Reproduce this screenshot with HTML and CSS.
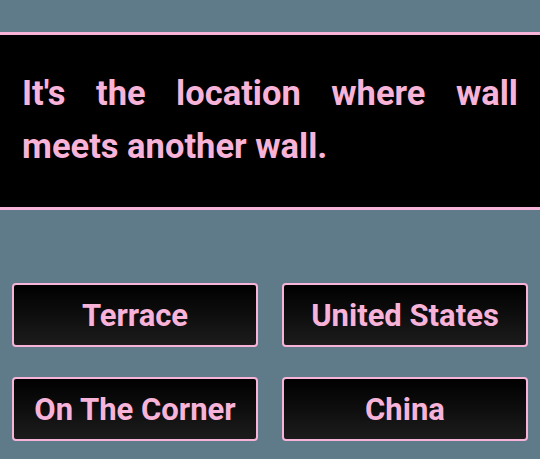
FILE: index.html
```html
<!DOCTYPE html>
<html>
<head>
<meta charset="utf-8">
<link rel="stylesheet" href="styles.css">
</head>
<body>
<div class="question">
  <p class="question-text">It's the location where wall meets another wall.</p>
</div>
<div class="answers">
  <button class="answer">Terrace</button>
  <button class="answer">United States</button>
  <button class="answer">On The Corner</button>
  <button class="answer">China</button>
</div>
</body>
</html>
```
FILE: styles.css
```css
html, body {
  margin: 0;
  padding: 0;
}
body {
  background: #5f7b8a;
  font-family: Roboto, "Liberation Sans", sans-serif;
  width: 540px;
  height: 459px;
  overflow: hidden;
}
.question {
  margin-top: 32px;
  background: #000;
  border-top: 3px solid #f7b3d8;
  border-bottom: 3px solid #f7b3d8;
  padding: 32px 22px 34px;
}
.question-text {
  margin: 0;
  color: #f7b3d8;
  font-weight: 700;
  font-size: 34.5px;
  line-height: 53px;
  text-align: justify;
}
.answers {
  display: grid;
  grid-template-columns: 246px 246px;
  column-gap: 24px;
  row-gap: 30px;
  padding: 73px 12px 0;
}
.answer {
  height: 64px;
  border: 2px solid #f7b3d8;
  border-radius: 4px;
  background: linear-gradient(to bottom, #000 0%, #1c1c1c 100%);
  color: #f7b3d8;
  font-family: Roboto, "Liberation Sans", sans-serif;
  font-weight: 700;
  font-size: 31px;
  padding: 0;
}
```
